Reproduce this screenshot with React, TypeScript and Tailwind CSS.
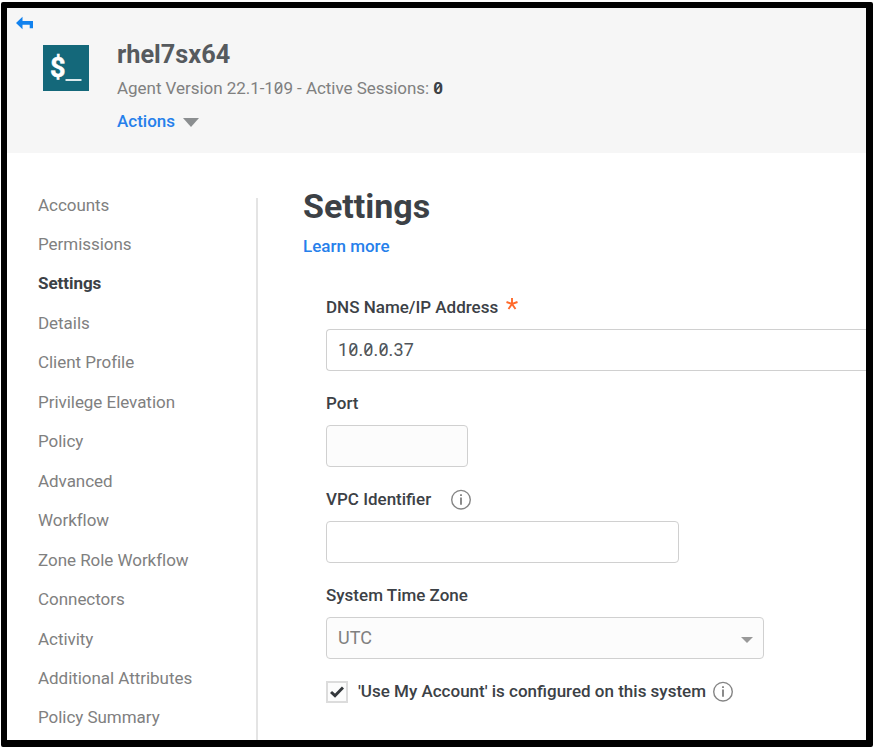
import type { ReactNode } from "react";

const navItems = [
  "Accounts",
  "Permissions",
  "Settings",
  "Details",
  "Client Profile",
  "Privilege Elevation",
  "Policy",
  "Advanced",
  "Workflow",
  "Zone Role Workflow",
  "Connectors",
  "Activity",
  "Additional Attributes",
  "Policy Summary",
];

// Zero digit with a diagonal slash laid over it
function Zero() {
  return (
    <span className="relative inline-block">
      0
      <svg className="absolute inset-0 h-full w-full" viewBox="0 0 10 20" preserveAspectRatio="none">
        <path d="M2.2 12.6 L7.8 7.4" stroke="currentColor" strokeWidth="1.5" />
      </svg>
    </span>
  );
}

function InfoIcon() {
  return (
    <svg className="h-[22px] w-[22px] shrink-0" viewBox="0 0 22 22" fill="none">
      <circle cx="11" cy="10.7" r="9.3" stroke="#858585" strokeWidth="1.4" />
      <path d="M11 8.4V15.8" stroke="#858585" strokeWidth="1.9" />
      <path d="M11 5.3V7.1" stroke="#858585" strokeWidth="1.9" />
    </svg>
  );
}

function Label({ children }: { children: ReactNode }) {
  return (
    <div className="flex h-6 items-center text-[17px] font-medium text-[#3c4146]">{children}</div>
  );
}

export default function App() {
  return (
    <div className="h-[751px] w-[874px] bg-white pl-px pt-[2px] font-['Roboto',sans-serif]">
      <div className="flex h-[745px] w-[872px] flex-col overflow-hidden rounded-[2px] border-t-[6px] border-r-[7px] border-b-[7px] border-l-[6px] border-black bg-white">
        <header className="flex h-[145px] shrink-0 bg-[#f6f6f6]">
          <div className="w-[110px] pl-[9px] pt-[8px]">
            <svg className="h-[14px] w-[18px]" viewBox="0 0 18 14" fill="#1282ee">
              <path d="M0 7 L6.5 0.7 V5 H17 V12.3 H13.7 V8.8 H6.5 V13.3 Z" />
            </svg>
            <svg className="ml-[27px] mt-[15px] h-[46px] w-[46px]" viewBox="0 0 46 46">
              <rect width="46" height="46" fill="#14687a" />
              <text x="7" y="31.5" fill="#fff" stroke="#fff" strokeWidth="0.5" fontFamily="Roboto" fontWeight="700" fontSize="27">$</text>
              <rect x="22.5" y="34" width="16" height="2" fill="#dce9ec" />
            </svg>
          </div>
          <div className="pt-[31px]">
            <h1 className="h-8 text-[25.3px] leading-8 font-bold text-[#565a5e]">rhel7sx64</h1>
            <p className="mt-[5px] h-6 text-[17px] leading-6 tracking-[-0.04px] text-[#808080]">
              Agent Version 22.1-1<Zero />9 - Active Sessions: <b className="text-[#3c4146]"><Zero /></b>
            </p>
            <div className="mt-[10px] flex h-6 items-center gap-2 text-[17px] font-medium text-[#2680eb]">
              <span>Actions</span>
              <svg className="h-[9px] w-[16px]" viewBox="0 0 16 9"><path d="M0 0H16L8 9Z" fill="#8b8e90" /></svg>
            </div>
          </div>
        </header>
        <div className="flex min-h-0 flex-1">
          <nav className="mt-[45px] w-[251px] shrink-0 border-r-2 border-[#e4e4e4] pl-[31px]">
            <ul className="-mt-[12.4px]">
              {navItems.map((item) => (
                <li
                  key={item}
                  className={
                    item === "Settings"
                      ? "flex h-[39.46px] items-center text-[17px] font-bold tracking-[-0.04px] text-[#3c4146]"
                      : "flex h-[39.46px] items-center text-[17px] tracking-[-0.04px] text-[#808080]"
                  }
                >
                  {item}
                </li>
              ))}
            </ul>
          </nav>
          <main className="flex-1 pt-[33px] pl-[45px]">
            <h2 className="h-10 text-[34px] leading-10 font-bold text-[#3c4146]">Settings</h2>
            <a className="mt-[8px] block h-6 text-[17px] leading-6 font-medium text-[#2680eb]">Learn more</a>
            <section className="mt-[38px] ml-[23px]">
              <Label>
                DNS Name/IP Address
                <svg className="mb-2 ml-2 h-[12px] w-[12px]" viewBox="0 0 12 12" stroke="#ff6a2b" strokeWidth="1.9">
                  <path d="M6 0V6L11.5 4M6 6L9.5 11M6 6L2.5 11M6 6L0.5 4" fill="none" />
                </svg>
              </Label>
              <div className="mt-[9px] flex h-[42px] items-center rounded-l-[4px] border border-r-0 border-[#d0d0d0] pb-[2px] pl-[11px] text-[18px] text-[#50555a]">
                <span className="tracking-[0.1px]">1<Zero />.<Zero />.<Zero />.37</span>
              </div>
              <div className="mt-[21px]"><Label>Port</Label></div>
              <div className="mt-[9px] h-[42px] w-[142px] rounded-[4px] border border-[#d0d0d0] bg-[#fcfcfc]" />
              <div className="mt-[21px]">
                <Label><span className="mr-[19px]">VPC Identifier</span><InfoIcon /></Label>
              </div>
              <div className="mt-[9px] h-[42px] w-[353px] rounded-[4px] border border-[#d0d0d0]" />
              <div className="mt-[21px]"><Label>System Time Zone</Label></div>
              <div className="mt-[9px] flex h-[42px] w-[438px] items-center justify-between rounded-[4px] border border-[#d0d0d0] bg-[#fcfcfc] pr-[10px] pl-[11px] text-[18px] text-[#808080]">
                <span className="pb-[2px]">UTC</span>
                <svg className="mt-[3px] h-[6px] w-[12px]" viewBox="0 0 12 6"><path d="M0 0H12L6 6Z" fill="#999" /></svg>
              </div>
              <div className="mt-[21px] flex items-center">
                <span className="flex h-[22px] w-[22px] items-center justify-center border-2 border-[#dcdcdc] bg-[#fcfcfc]">
                  <svg className="h-[12px] w-[14px]" viewBox="0 0 14 12"><path d="M1 6L5 9.7L13 1.5" fill="none" stroke="#34383c" strokeWidth="3" /></svg>
                </span>
                <div className="ml-[10px]">
                  <Label><span className="mr-[6px]">'Use My Account' is configured on this system</span><InfoIcon /></Label>
                </div>
              </div>
            </section>
          </main>
        </div>
      </div>
    </div>
  );
}
